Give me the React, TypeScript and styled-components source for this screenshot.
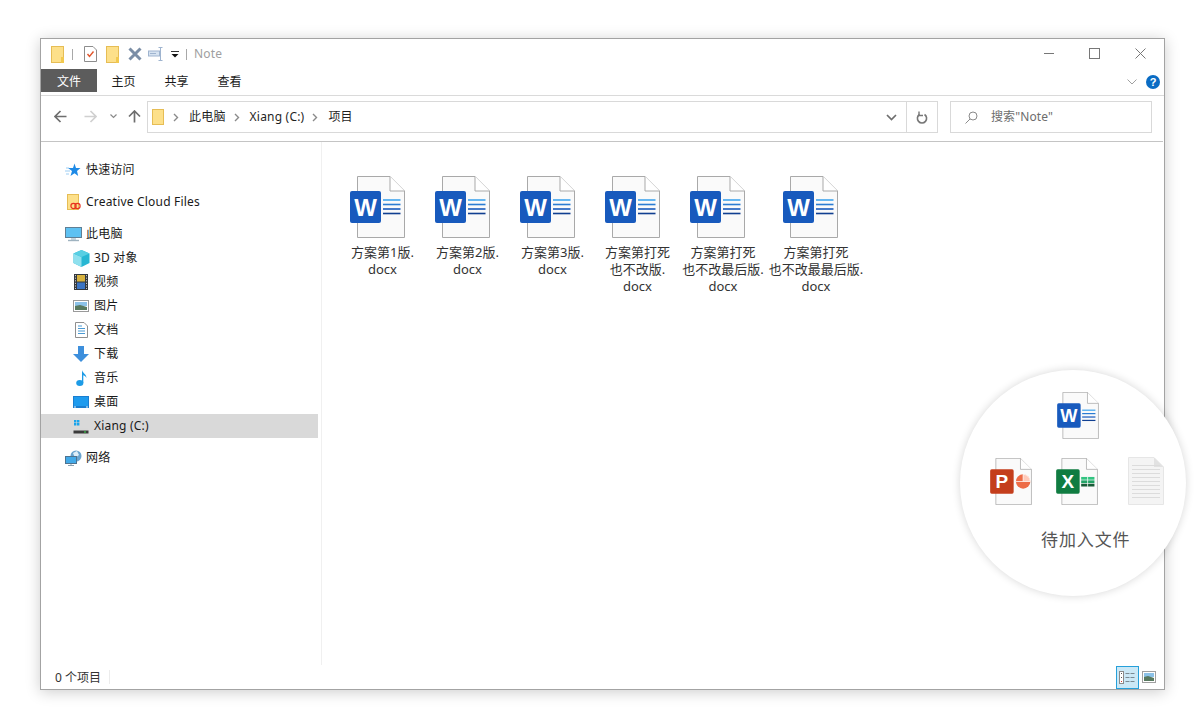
import styled, { createGlobalStyle } from "styled-components";
import type { ReactNode } from "react";

const GlobalStyle = createGlobalStyle`
  html, body {
    margin: 0;
    background: #fff;
    font-family: "Noto Sans", "Noto Sans CJK SC", sans-serif;
    font-size: 12px;
    color: #1a1a1a;
  }
`;

const Page = styled.div`
  position: relative;
  width: 1200px;
  height: 728px;
  padding: 38px 0 0 40px;
  box-sizing: border-box;
  overflow: hidden;
`;

const Window = styled.div`
  width: 1125px;
  height: 652px;
  box-sizing: border-box;
  border: 1px solid #a3a3a3;
  background: #fff;
  display: flex;
  flex-direction: column;
  box-shadow: 0 2px 14px rgba(0, 0, 0, 0.2);
`;

const TitleBar = styled.div`
  height: 30px;
  display: flex;
  align-items: center;
  padding-left: 10px;
  flex-shrink: 0;
`;

const QuickIcon = styled.svg<{ $gap?: number }>`
  display: block;
  margin-right: ${({ $gap }) => $gap ?? 0}px;
  flex-shrink: 0;
`;

const TitleSep = styled.div<{ $left: number; $right: number }>`
  width: 1px;
  height: 11px;
  background: #a8a8a8;
  margin: 0 ${({ $right }) => $right}px 0 ${({ $left }) => $left}px;
`;

const TitleText = styled.span`
  color: #a0a0a0;
  font-size: 12px;
  flex: 1;
  margin-top: -2px;
  letter-spacing: 0.2px;
`;

const WindowControls = styled.div`
  display: flex;
  align-items: center;
  gap: 35px;
  padding-right: 18px;
  margin-bottom: 2px;
`;

const TabRow = styled.div`
  height: 26px;
  display: flex;
  align-items: flex-start;
  border-bottom: 1px solid #dadada;
  flex-shrink: 0;
`;

const FileTab = styled.div`
  width: 56px;
  height: 23px;
  background: #5c5c5c;
  color: #fff;
  display: flex;
  align-items: center;
  justify-content: center;
`;

const Tab = styled.div`
  width: 53px;
  height: 23px;
  display: flex;
  align-items: center;
  justify-content: center;
`;

const TabSpacer = styled.div`
  flex: 1;
`;

const RibbonEnd = styled.div`
  display: flex;
  align-items: center;
  gap: 9px;
  height: 23px;
  padding: 1px 4px 0 0;
`;

const HelpBadge = styled.div`
  width: 14px;
  height: 14px;
  border-radius: 50%;
  background: #0a6cc4;
  color: #fff;
  font: bold 11px/14px "Liberation Sans", sans-serif;
  text-align: center;
`;

const AddressRow = styled.div`
  height: 46px;
  display: flex;
  align-items: flex-start;
  padding-top: 5px;
  box-sizing: border-box;
  border-bottom: 1px solid #c4c4c4;
  margin-right: 1px;
  flex-shrink: 0;
`;

const NavButtons = styled.div`
  width: 106px;
  height: 31px;
  display: flex;
  align-items: center;
  padding-left: 13px;
  box-sizing: border-box;
`;

const AddressBox = styled.div`
  width: 791px;
  height: 32px;
  box-sizing: border-box;
  border: 1px solid #d9d9d9;
  display: flex;
  align-items: center;
`;

const Crumbs = styled.div`
  flex: 1;
  display: flex;
  align-items: center;
  padding-left: 4px;
  height: 100%;
`;

const CrumbFolderGap = styled.span`
  width: 8px;
`;

const Crumb = styled.span`
  margin: -2px 8px 0 10px;
  color: #1f1f1f;
  letter-spacing: 0.2px;
  white-space: nowrap;
`;

const AddressAction = styled.div<{ $width: number; $divider?: boolean }>`
  width: ${({ $width }) => $width}px;
  height: 100%;
  display: flex;
  align-items: center;
  justify-content: center;
  border-left: ${({ $divider }) => ($divider ? "1px solid #d9d9d9" : "none")};
  box-sizing: border-box;
`;

const SearchBox = styled.div`
  width: 202px;
  height: 32px;
  margin-left: 12px;
  box-sizing: border-box;
  border: 1px solid #d9d9d9;
  display: flex;
  align-items: center;
  padding-left: 14px;
  gap: 13px;
  color: #6d6d6d;
`;

const SearchText = styled.span`
  margin-top: -2px;
  letter-spacing: 0.1px;
`;

const Body = styled.div`
  flex: 1;
  display: flex;
  min-height: 0;
`;

const Sidebar = styled.nav`
  width: 281px;
  box-sizing: border-box;
  padding: 16px 3px 0 0;
  border-right: 1px solid #f0f0f0;
  flex-shrink: 0;
`;

const NavGroup = styled.div`
  margin-bottom: 8px;
`;

const NavRow = styled.div<{ $sub?: boolean; $active?: boolean }>`
  height: 24px;
  display: flex;
  align-items: center;
  gap: 4px;
  padding-left: ${({ $sub }) => ($sub ? 31 : 23)}px;
  background: ${({ $active }) => ($active ? "#d9d9d9" : "transparent")};
`;

const NavIconSlot = styled.span`
  width: 18px;
  height: 18px;
  display: flex;
  align-items: center;
  justify-content: center;
  flex-shrink: 0;
`;

const NavLabel = styled.span`
  margin-top: -2px;
  letter-spacing: 0.2px;
  white-space: nowrap;
`;

const Content = styled.main`
  flex: 1;
  display: flex;
  align-items: flex-start;
  padding: 34px 0 0 18px;
`;

const FileItem = styled.div<{ $width: number; $iconLeft: number }>`
  width: ${({ $width }) => $width}px;
  flex-shrink: 0;
  display: flex;
  flex-direction: column;
  align-items: center;
  & > svg {
    align-self: flex-start;
    margin-left: ${({ $iconLeft }) => $iconLeft}px;
  }
`;

const FileName = styled.div`
  margin-top: 6px;
  text-align: center;
  font-size: 13px;
  line-height: 17px;
  color: #333;
  white-space: nowrap;
`;

const StatusBar = styled.div`
  height: 24px;
  display: flex;
  align-items: center;
  padding-left: 14px;
  flex-shrink: 0;
  color: #333;
`;

const StatusSep = styled.div`
  width: 1px;
  height: 14px;
  background: #ececec;
  margin-left: 8px;
`;

const StatusSpacer = styled.div`
  flex: 1;
`;

const DetailsToggle = styled.div`
  width: 23px;
  height: 23px;
  box-sizing: border-box;
  border: 1px solid #26a0da;
  background: #cbe8f6;
  display: flex;
  align-items: center;
  justify-content: center;
  margin-right: 3px;
`;

const ThumbToggle = styled.div`
  width: 14px;
  height: 23px;
  display: flex;
  align-items: center;
  margin-right: 8px;
`;

const Tray = styled.aside`
  position: absolute;
  left: 960px;
  top: 370px;
  width: 226px;
  height: 226px;
  border-radius: 50%;
  background: #fff;
  box-shadow: 0 0 8px rgba(0, 0, 0, 0.16);
  box-sizing: border-box;
  padding-top: 22px;
`;

const TrayTop = styled.div`
  display: flex;
  padding-left: 97px;
`;

const TrayRow = styled.div`
  display: flex;
  align-items: flex-start;
  gap: 24px;
  padding: 19px 0 0 30px;
`;

const BlankSvg = styled.svg`
  display: block;
  margin: -1px 0 0 6px;
`;

const TrayLabel = styled.div`
  margin-top: 23px;
  padding-left: 81px;
  font-size: 17px;
  line-height: 24px;
  letter-spacing: 0.9px;
  color: #555;
  white-space: nowrap;
`;

type DocKind = "word" | "ppt" | "excel";

const docColors: Record<DocKind, string> = {
  word: "#185abd",
  ppt: "#c43e1c",
  excel: "#107c41",
};

const docLetters: Record<DocKind, string> = { word: "W", ppt: "P", excel: "X" };

// big file icon is 55x62, the tray uses the same drawing scaled down
const DocIcon = ({ kind, width, height }: { kind: DocKind; width: number; height: number }) => (
  <svg width={width} height={height} viewBox="0 0 55 62">
    <path d="M7.5 .5H40L54.5 15V61.5H7.5Z" fill="#fafafa" stroke="#a9a9a9" />
    <path d="M40 .5V15H54.5" fill="#fff" stroke="#a9a9a9" />
    <rect x="0" y="15" width="31" height="32" rx="2" fill={docColors[kind]} />
    <text
      x="15.5"
      y="40"
      textAnchor="middle"
      fill="#fff"
      fontFamily="Liberation Sans"
      fontWeight="bold"
      fontSize={kind === "word" ? 24 : 25}
    >
      {docLetters[kind]}
    </text>
    {kind === "word" && (
      <g strokeWidth="1.6">
        <path d="M33 24H50.5" stroke="#41a5ee" />
        <path d="M33 28.5H50.5" stroke="#2b7cd3" />
        <path d="M33 33H50.5" stroke="#185abd" />
        <path d="M33 37.5H50.5" stroke="#103f91" />
      </g>
    )}
    {kind === "ppt" && (
      <g>
        <circle cx="43.5" cy="31" r="9.5" fill="#ed6c47" />
        <path d="M43.5 21.5A9.5 9.5 0 0 1 53 31H43.5Z" fill="#ffc9b8" stroke="#fff" strokeWidth="1" />
        <path d="M34 31H43.5" stroke="#fff" strokeWidth="1" />
      </g>
    )}
    {kind === "excel" && (
      <g>
        <rect x="33" y="25" width="17.5" height="3.6" fill="#33c481" />
        <rect x="33" y="29.5" width="17.5" height="3.6" fill="#21a366" />
        <rect x="33" y="34" width="17.5" height="3.6" fill="#185c37" />
        <path d="M41.5 25V38" stroke="#fff" strokeWidth="1" />
      </g>
    )}
  </svg>
);

const BlankDoc = () => (
  <BlankSvg width={36} height={48} viewBox="0 0 36 48">
    <path d="M.5 .5H26L35.5 10V47.5H.5Z" fill="#f4f4f4" stroke="#e6e6e6" />
    <path d="M26 .5V10H35.5Z" fill="#e2e2e2" />
    <g stroke="#dcdcdc">
      {[8, 12, 16, 20, 24, 28, 32, 36, 40].map((y) => (
        <path key={y} d={`M4 ${y}.5H32`} />
      ))}
    </g>
  </BlankSvg>
);

const FolderGlyph = ({ gap }: { gap?: number }) => (
  <QuickIcon $gap={gap} width={13} height={17} viewBox="0 0 13 17">
    <rect x=".5" y=".5" width="12" height="16" fill="#fde08a" stroke="#e6bd55" />
    <rect x="10" y="11" width="3" height="6" fill="#f2c94f" />
  </QuickIcon>
);

const Folder = ({ kind }: { kind?: "cloud" }) => (
  <svg width={13} height={17} viewBox="0 0 13 17" style={{ overflow: "visible" }}>
    <rect x=".5" y=".5" width="11" height="15" fill="#fde08a" stroke="#e6bd55" />
    {kind === "cloud" && (
      <g fill="none" stroke="#e8331f" strokeWidth="1.2">
        <circle cx="6.5" cy="12" r="2.6" />
        <circle cx="10.5" cy="12" r="2.6" />
      </g>
    )}
  </svg>
);

const icons: Record<string, ReactNode> = {
  star: (
    <svg width={16} height={14} viewBox="0 0 16 14">
      <path d="M9.5 .5L11 5H15.5L12 8L13.2 13L9.5 10.2L5.5 13L7 8L3 5H8Z" fill="#1e8ae6" />
      <path d="M1 5H4M0 8H5M1 11H4" stroke="#9ccdf3" />
    </svg>
  ),
  cloud: <Folder kind="cloud" />,
  pc: (
    <svg width={17} height={15} viewBox="0 0 17 15">
      <rect x=".5" y=".5" width="16" height="10" fill="#5ec1f2" stroke="#5f7f95" />
      <path d="M6 11H11V13H6Z" fill="#c9d6de" />
      <path d="M3 13.5H14" stroke="#9fb3c0" strokeWidth="1.4" />
    </svg>
  ),
  cube: (
    <svg width={17} height={17} viewBox="0 0 17 17">
      <path d="M8.5 0L16.5 3.5V13L8.5 17L.5 13V3.5Z" fill="#27b7d3" />
      <path d="M.5 3.5L8.5 7V17L.5 13Z" fill="#8fe0ee" />
      <path d="M8.5 0L16.5 3.5L8.5 7L.5 3.5Z" fill="#58cfe3" />
    </svg>
  ),
  film: (
    <svg width={14} height={16} viewBox="0 0 14 16">
      <rect width="14" height="16" fill="#33383d" />
      <rect x="3" y="1" width="8" height="6.5" fill="#d7b23e" />
      <rect x="3" y="8.5" width="8" height="6.5" fill="#3b74c4" />
      <path d="M1.5 1V15M12.5 1V15" stroke="#c8c8c8" strokeDasharray="1.2 1.4" />
    </svg>
  ),
  picture: (
    <svg width={16} height={12} viewBox="0 0 16 12">
      <rect x=".5" y=".5" width="15" height="11" fill="#fff" stroke="#9a9a9a" />
      <rect x="2" y="2" width="12" height="4" fill="#8cc2e8" />
      <path d="M2 6L7 5L14 7V10H2Z" fill="#58795f" />
    </svg>
  ),
  doc: (
    <svg width={13} height={16} viewBox="0 0 13 16">
      <path d="M.5 .5H9L12.5 4V15.5H.5Z" fill="#fff" stroke="#8f8f8f" />
      <path d="M3 4H7M3 6.5H10M3 9H10M3 11.5H10" stroke="#4a9ad4" />
    </svg>
  ),
  download: (
    <svg width={16} height={16} viewBox="0 0 16 16">
      <path d="M5 0H11V8H16L8 16L0 8H5Z" fill="#3d8fdc" />
    </svg>
  ),
  music: (
    <svg width={11} height={16} viewBox="0 0 11 16">
      <ellipse cx="3.8" cy="13" rx="3.6" ry="3" fill="#1d9be6" />
      <path d="M6 13V0C6.5 3 10.5 4 10.5 8C9.5 6 8 5.3 7.3 5.2V13Z" fill="#1d9be6" />
    </svg>
  ),
  desktop: (
    <svg width={16} height={12} viewBox="0 0 16 12">
      <rect width="16" height="12" fill="#1a7ed0" />
      <rect x="1" y="1" width="14" height="9" fill="#1e9bee" />
      <path d="M1 11H3M13 11H15" stroke="#e6f3fc" />
    </svg>
  ),
  drive: (
    <svg width={16} height={15} viewBox="0 0 16 15">
      <path d="M1 1H3.4V3.4H1ZM4 1H6.4V3.4H4ZM1 4H3.4V6.4H1ZM4 4H6.4V6.4H4Z" fill="#19a4ec" />
      <path d="M2 9H14L15.5 11V14.5H.5V11Z" fill="#d8d8d8" />
      <rect x=".5" y="11.5" width="15" height="3" fill="#3a3a3a" />
      <rect x="11" y="12.5" width="2" height="1" fill="#38e04a" />
    </svg>
  ),
  network: (
    <svg width={17} height={16} viewBox="0 0 17 16">
      <circle cx="11" cy="6" r="5.5" fill="#6aa4cf" />
      <path d="M8 3L12 1L14 5L10 8Z" fill="#dfeef8" />
      <rect x=".5" y="6.5" width="11" height="7" fill="#42a9e8" stroke="#4d7390" />
      <path d="M3 15.5H9M6 14V15.5" stroke="#8aa0af" />
    </svg>
  ),
};

type NavEntry = { icon: string; label: string; sub?: boolean; active?: boolean };

const navGroups: NavEntry[][] = [
  [{ icon: "star", label: "快速访问" }],
  [{ icon: "cloud", label: "Creative Cloud Files" }],
  [
    { icon: "pc", label: "此电脑" },
    { icon: "cube", label: "3D 对象", sub: true },
    { icon: "film", label: "视频", sub: true },
    { icon: "picture", label: "图片", sub: true },
    { icon: "doc", label: "文档", sub: true },
    { icon: "download", label: "下载", sub: true },
    { icon: "music", label: "音乐", sub: true },
    { icon: "desktop", label: "桌面", sub: true },
    { icon: "drive", label: "Xiang (C:)", sub: true, active: true },
  ],
  [{ icon: "network", label: "网络" }],
];

const files = [
  { lines: ["方案第1版.", "docx"], width: 85, iconLeft: 10 },
  { lines: ["方案第2版.", "docx"], width: 85, iconLeft: 10 },
  { lines: ["方案第3版.", "docx"], width: 85, iconLeft: 10 },
  { lines: ["方案第打死", "也不改版.", "docx"], width: 85, iconLeft: 10 },
  { lines: ["方案第打死", "也不改最后版.", "docx"], width: 86, iconLeft: 10 },
  { lines: ["方案第打死", "也不改最最后版.", "docx"], width: 100, iconLeft: 17 },
];

const Chevron = ({ color = "#8a8a8a" }: { color?: string }) => (
  <svg width={6} height={9} viewBox="0 0 6 9">
    <path d="M1 1L4.5 4.5L1 8" fill="none" stroke={color} strokeWidth="1.4" />
  </svg>
);

const Arrow = ({ color, rotate, gap }: { color: string; rotate: number; gap: number }) => (
  <QuickIcon $gap={gap} width={13} height={13} viewBox="0 0 13 13" style={{ transform: `rotate(${rotate}deg)` }}>
    <path d="M1 6.5H12.5M6.5 1L1 6.5L6.5 12" fill="none" stroke={color} strokeWidth="1.7" />
  </QuickIcon>
);

export default function App() {
  return (
    <>
      <GlobalStyle />
      <Page>
        <Window>
          <TitleBar>
            <FolderGlyph />
            <TitleSep $left={8} $right={11} />
            <QuickIcon $gap={9} width={13} height={16} viewBox="0 0 13 16">
              <path d="M.5 .5H9L12.5 4V15.5H.5Z" fill="#fff" stroke="#8d8d8d" />
              <path d="M3.5 8L5.5 10.5L9.5 5.5" fill="none" stroke="#e2552b" strokeWidth="1.4" />
            </QuickIcon>
            <FolderGlyph gap={9} />
            <QuickIcon $gap={6} width={14} height={14} viewBox="0 0 14 14">
              <path d="M1.5 1.5L12.5 12.5M12.5 1.5L1.5 12.5" stroke="#7b8ea6" strokeWidth="3" />
            </QuickIcon>
            <QuickIcon $gap={6} width={17} height={14} viewBox="0 0 17 14">
              <rect x=".5" y="4" width="11" height="5" fill="#d7e3f1" stroke="#9fb4cf" />
              <path d="M12.5 .5V13.5M10.5 .5H14.5M10.5 13.5H14.5" fill="none" stroke="#9fb4cf" />
              <path d="M2 6.5H8" stroke="#9fb4cf" />
            </QuickIcon>
            <QuickIcon width={8} height={7} viewBox="0 0 8 7">
              <path d="M0 .5H8" stroke="#333" />
              <path d="M.5 3H7.5L4 6.5Z" fill="#111" />
            </QuickIcon>
            <TitleSep $left={7} $right={7} />
            <TitleText>Note</TitleText>
            <WindowControls>
              <svg width={10} height={10} viewBox="0 0 10 10">
                <path d="M0 5.5H10" stroke="#777" />
              </svg>
              <svg width={11} height={11} viewBox="0 0 11 11">
                <rect x=".5" y=".5" width="10" height="10" fill="none" stroke="#777" />
              </svg>
              <svg width={11} height={11} viewBox="0 0 11 11">
                <path d="M.5 .5L10.5 10.5M10.5 .5L.5 10.5" stroke="#777" />
              </svg>
            </WindowControls>
          </TitleBar>
          <TabRow>
            <FileTab>文件</FileTab>
            <Tab>主页</Tab>
            <Tab>共享</Tab>
            <Tab>查看</Tab>
            <TabSpacer />
            <RibbonEnd>
              <svg width={10} height={6} viewBox="0 0 10 6">
                <path d="M.5 .5L5 5L9.5 .5" fill="none" stroke="#a0a0a0" />
              </svg>
              <HelpBadge>?</HelpBadge>
            </RibbonEnd>
          </TabRow>
          <AddressRow>
            <NavButtons>
              <Arrow color="#6e6e6e" rotate={0} gap={17} />
              <Arrow color="#d0d0d0" rotate={180} gap={13} />
              <QuickIcon $gap={11} width={7} height={5} viewBox="0 0 7 5">
                <path d="M.5 .5L3.5 3.5L6.5 .5" fill="none" stroke="#8a8a8a" strokeWidth="1.2" />
              </QuickIcon>
              <Arrow color="#6e6e6e" rotate={90} gap={0} />
            </NavButtons>
            <AddressBox>
              <Crumbs>
                <Folder />
                <CrumbFolderGap />
                <Chevron />
                <Crumb>此电脑</Crumb>
                <Chevron />
                <Crumb>Xiang (C:)</Crumb>
                <Chevron />
                <Crumb>项目</Crumb>
              </Crumbs>
              <AddressAction $width={30}>
                <svg width={11} height={7} viewBox="0 0 11 7">
                  <path d="M1 1L5.5 5.5L10 1" fill="none" stroke="#6e6e6e" strokeWidth="1.7" />
                </svg>
              </AddressAction>
              <AddressAction $width={31} $divider>
                <svg width={12} height={13} viewBox="0 0 12 13">
                  <path d="M3.5 3.5A4.6 4.6 0 1 0 8.5 3.5" fill="none" stroke="#777" strokeWidth="1.6" />
                  <path d="M3 .5V4.5H7" fill="none" stroke="#777" strokeWidth="1.4" />
                </svg>
              </AddressAction>
            </AddressBox>
            <SearchBox>
              <svg width={13} height={13} viewBox="0 0 13 13">
                <circle cx="8" cy="5" r="4" fill="none" stroke="#8a8a8a" />
                <path d="M5 8L.5 12.5" stroke="#8a8a8a" />
              </svg>
              <SearchText>搜索"Note"</SearchText>
            </SearchBox>
          </AddressRow>
          <Body>
            <Sidebar>
              {navGroups.map((group) => (
                <NavGroup key={group[0].label}>
                  {group.map((entry) => (
                    <NavRow key={entry.label} $sub={entry.sub} $active={entry.active}>
                      <NavIconSlot>{icons[entry.icon]}</NavIconSlot>
                      <NavLabel>{entry.label}</NavLabel>
                    </NavRow>
                  ))}
                </NavGroup>
              ))}
            </Sidebar>
            <Content>
              {files.map((file, i) => (
                <FileItem key={i} $width={file.width} $iconLeft={file.iconLeft}>
                  <DocIcon kind="word" width={55} height={62} />
                  <FileName>
                    {file.lines.map((line) => (
                      <div key={line}>{line}</div>
                    ))}
                  </FileName>
                </FileItem>
              ))}
            </Content>
          </Body>
          <StatusBar>
            0 个项目
            <StatusSep />
            <StatusSpacer />
            <DetailsToggle>
              <svg width={17} height={13} viewBox="0 0 17 13">
                <rect x=".5" y=".5" width="4" height="12" fill="#fff" stroke="#8a8a8a" />
                <path d="M2 2.5H3M2 6.5H3" stroke="#555" />
                <path d="M2 10.5H3" stroke="#d9342b" />
                <path d="M6.5 2.5H16.5M6.5 6.5H16.5M6.5 10.5H16.5" stroke="#7a8a93" strokeDasharray="4 1" />
              </svg>
            </DetailsToggle>
            <ThumbToggle>
              <svg width={14} height={12} viewBox="0 0 14 12">
                <rect x=".5" y=".5" width="13" height="11" fill="#fff" stroke="#a0a0a0" />
                <rect x="2" y="2" width="10" height="4" fill="#8cc2e8" />
                <path d="M2 6L6 5L12 7V10H2Z" fill="#58795f" />
              </svg>
            </ThumbToggle>
          </StatusBar>
        </Window>
        <Tray>
          <TrayTop>
            <DocIcon kind="word" width={42} height={47} />
          </TrayTop>
          <TrayRow>
            <DocIcon kind="ppt" width={42} height={47} />
            <DocIcon kind="excel" width={42} height={47} />
            <BlankDoc />
          </TrayRow>
          <TrayLabel>待加入文件</TrayLabel>
        </Tray>
      </Page>
    </>
  );
}
